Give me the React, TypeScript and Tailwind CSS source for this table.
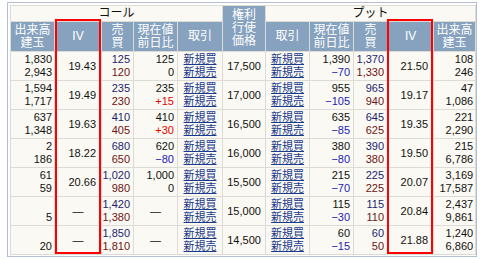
import React from "react";

type Row = {
  cv: [string, string];
  civ: string;
  cb: [string, string];
  cp: [string, string] | null;
  k: string;
  pp: [string, string];
  pb: [string, string];
  piv: string;
  pv: [string, string];
};

const rows: Row[] = [
  { cv: ["1,830", "2,943"], civ: "19.43", cb: ["125", "120"], cp: ["125", "0"], k: "17,500", pp: ["1,390", "−70"], pb: ["1,370", "1,330"], piv: "21.50", pv: ["108", "246"] },
  { cv: ["1,594", "1,717"], civ: "19.49", cb: ["235", "230"], cp: ["235", "+15"], k: "17,000", pp: ["955", "−105"], pb: ["965", "940"], piv: "19.17", pv: ["47", "1,086"] },
  { cv: ["637", "1,348"], civ: "19.63", cb: ["410", "405"], cp: ["410", "+30"], k: "16,500", pp: ["635", "−85"], pb: ["645", "625"], piv: "19.35", pv: ["221", "2,290"] },
  { cv: ["2", "186"], civ: "18.22", cb: ["680", "650"], cp: ["620", "−80"], k: "16,000", pp: ["380", "−80"], pb: ["390", "380"], piv: "19.50", pv: ["215", "6,786"] },
  { cv: ["61", "59"], civ: "20.66", cb: ["1,020", "980"], cp: ["1,000", "0"], k: "15,500", pp: ["215", "−70"], pb: ["225", "225"], piv: "20.07", pv: ["3,169", "17,587"] },
  { cv: ["\u00a0", "5"], civ: "—", cb: ["1,420", "1,380"], cp: null, k: "15,000", pp: ["115", "−30"], pb: ["115", "110"], piv: "20.84", pv: ["2,437", "9,861"] },
  { cv: ["\u00a0", "20"], civ: "—", cb: ["1,850", "1,810"], cp: null, k: "14,500", pp: ["60", "−15"], pb: ["60", "50"], piv: "21.88", pv: ["1,240", "6,860"] },
];

function changeColor(v: string) {
  if (v.startsWith("+")) return "text-[#e60000]";
  if (v.startsWith("−")) return "text-[#1c1cb4]";
  return "text-[#111111]";
}

const td = "p-0 bg-[#faf9f3] align-middle";
const num = "text-[11px] leading-[13px]";

function Two({ a, b, ca, cb, cls }: { a: string; b: string; ca: string; cb: string; cls: string }) {
  return (
    <td className={`${td} py-px ${cls}`}>
      <div className={`${num} ${ca}`}>{a}</div>
      <div className={`${num} ${cb}`}>{b}</div>
    </td>
  );
}

function Links() {
  return (
    <td className={`${td} py-px text-center`}>
      <div className="text-[11px] leading-[13px]">
        <a className="text-[#1a3a8c] underline underline-offset-[1px]">新規買</a>
      </div>
      <div className="text-[11px] leading-[13px]">
        <a className="text-[#1a3a8c] underline underline-offset-[1px]">新規売</a>
      </div>
    </td>
  );
}

const th = "p-0 bg-[#87a2bf] text-white font-normal text-[12px] leading-[13px] text-center align-middle";

export default function App() {
  return (
    <div className="relative w-[480px] h-[259px] bg-white pl-[7px] pt-[2px] font-['Liberation_Sans','Noto_Sans_CJK_JP',sans-serif] text-[#111111]">
      <div className="w-[470px] border border-[#b3bfd0] pl-[2px] pt-[2px] pb-[1px]">
        <table className="table-fixed border-separate border-spacing-[1px] bg-[#dddbd5] w-[466px]">
          <colgroup>
            <col className="w-[43px]" />
            <col className="w-[46px]" />
            <col className="w-[31px]" />
            <col className="w-[43px]" />
            <col className="w-[44px]" />
            <col className="w-[42px]" />
            <col className="w-[43px]" />
            <col className="w-[43px]" />
            <col className="w-[33px]" />
            <col className="w-[45px]" />
            <col className="w-[41px]" />
          </colgroup>
          <thead>
            <tr>
              <th colSpan={5} className="p-0 h-[15px] bg-[#faf9f3] text-[#111111] font-normal text-[12px] leading-[15px] text-center">コール</th>
              <th rowSpan={2} className={`${th} leading-[12px]`}>
                <div>権利</div>
                <div>行使</div>
                <div>価格</div>
              </th>
              <th colSpan={5} className="p-0 h-[15px] bg-[#faf9f3] text-[#111111] font-normal text-[12px] leading-[15px] text-center">プット</th>
            </tr>
            <tr>
              <th className={`${th} h-[29px]`}><div>出来高</div><div>建玉</div></th>
              <th className={`${th} text-[11px]`}>IV</th>
              <th className={th}><div>売</div><div>買</div></th>
              <th className={th}><div>現在値</div><div>前日比</div></th>
              <th className={th}>取引</th>
              <th className={th}>取引</th>
              <th className={th}><div>現在値</div><div>前日比</div></th>
              <th className={th}><div>売</div><div>買</div></th>
              <th className={`${th} text-[11px]`}>IV</th>
              <th className={th}><div>出来高</div><div>建玉</div></th>
            </tr>
          </thead>
          <tbody>
            {rows.map((r, i) => (
              <tr key={i} className="h-[28px]">
                <Two a={r.cv[0]} b={r.cv[1]} ca="" cb="" cls="text-right pr-[2px]" />
                <td className={`${td} ${num} ${r.civ === "—" ? "text-center" : "text-right pr-[5px]"}`}>{r.civ}</td>
                <Two a={r.cb[0]} b={r.cb[1]} ca="text-[#1e1e6e]" cb="text-[#6e1414]" cls="text-right pr-[3px]" />
                {r.cp ? (
                  <Two a={r.cp[0]} b={r.cp[1]} ca="" cb={changeColor(r.cp[1])} cls="text-right pr-[3px]" />
                ) : (
                  <td className={`${td} ${num} text-center`}>—</td>
                )}
                <Links />
                <td className={`${td} ${num} text-center`}>{r.k}</td>
                <Links />
                <Two a={r.pp[0]} b={r.pp[1]} ca="" cb={changeColor(r.pp[1])} cls="text-right pr-[3px]" />
                <Two a={r.pb[0]} b={r.pb[1]} ca="text-[#1e1e6e]" cb="text-[#6e1414]" cls="text-right pr-[3px]" />
                <td className={`${td} ${num} text-right pr-[5px]`}>{r.piv}</td>
                <Two a={r.pv[0]} b={r.pv[1]} ca="" cb="" cls="text-right pr-[2px]" />
              </tr>
            ))}
          </tbody>
        </table>
      </div>
      <div className="pointer-events-none absolute left-[55px] top-[19px] w-[46px] h-[235px] border-2 border-[#ff0000]" />
      <div className="pointer-events-none absolute left-[387px] top-[19px] w-[46px] h-[235px] border-2 border-[#ff0000]" />
    </div>
  );
}
